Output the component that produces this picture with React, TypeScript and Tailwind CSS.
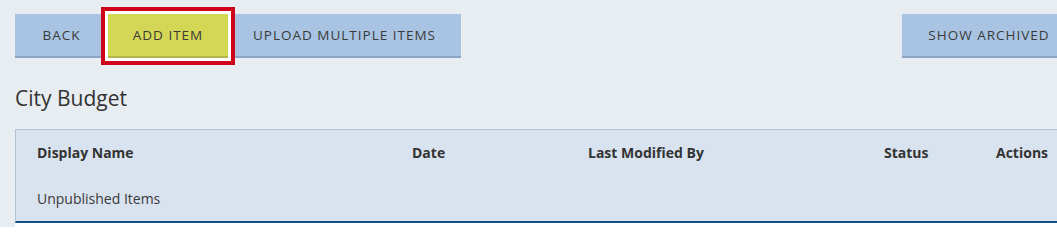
import React from 'react';

const font = { fontFamily: '"Open Sans", "Noto Sans", sans-serif' };

const ToolButton: React.FC<{ label: string; active?: boolean; className?: string }> = ({ label, active = false, className = '' }) => {
  const tone = active
    ? 'bg-[#d4d755] border-[#b3b64a] relative z-10 shadow-[0_0_0_3px_#ffffff,0_0_0_7px_#d0021b]'
    : 'bg-[#a8c4e2] border-[#8ba5c2]';
  return (
    <button
      className={`h-[44px] shrink-0 flex items-center justify-center whitespace-nowrap border-b-2 text-[13.5px] tracking-[1px] text-[#3a3a3a] uppercase ${tone} ${className}`}
    >
      {label}
    </button>
  );
};

export default function App() {
  return (
    <div className="w-full h-[227px] overflow-hidden bg-[#e8edf2]" style={font}>
      <div className="w-[1100px] pl-[15px] pt-[14px]">
        <div className="flex items-start">
          <ToolButton label="Back" className="w-[93px]" />
          <ToolButton label="Add Item" active className="w-[120px]" />
          <ToolButton label="Upload Multiple Items" className="w-[233px]" />
          <ToolButton label="Show Archived" className="ml-[441px] w-[174px]" />
        </div>

        <h1 className="mt-[26px] text-[21px] leading-[28px] text-[#333]">City Budget</h1>

        <div className="mt-[17px] border-t border-l border-[#b3c2d3] bg-[#d9e3ef] border-b-2 border-b-[#0e5285]">
          <div className="grid grid-cols-[375px_176px_296px_112px_1fr] h-[45px] items-center text-[14px] font-bold text-[#333]">
            <div className="pl-[21px]">Display Name</div>
            <div className="pl-[21px]">Date</div>
            <div className="pl-[21px]">Last Modified By</div>
            <div className="pl-[21px]">Status</div>
            <div className="pl-[21px]">Actions</div>
          </div>
          <div className="h-[46px] flex items-center pl-[21px] text-[14px] text-[#3a3a3a]">
            Unpublished Items
          </div>
        </div>
        <div className="h-[10px] bg-white" />
      </div>
    </div>
  );
}
